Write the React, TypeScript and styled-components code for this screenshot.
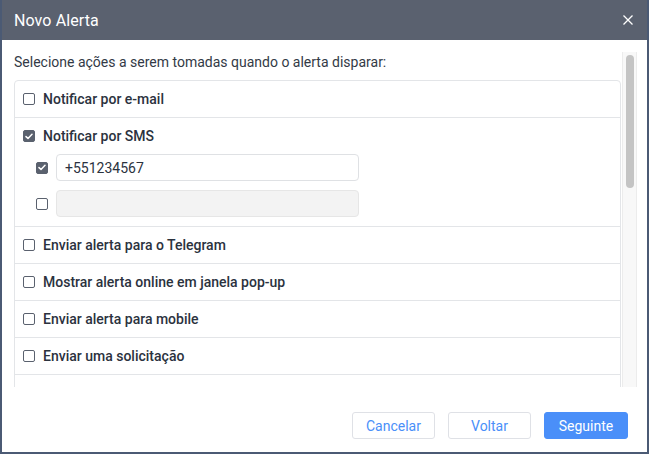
import React from "react";
import styled, { createGlobalStyle } from "styled-components";

const Global = createGlobalStyle`
  html, body { margin: 0; padding: 0; background: #fff; }
  body { font-family: Roboto, "Liberation Sans", sans-serif; }
  * { box-sizing: border-box; }
`;

const Dialog = styled.div`
  width: 649px;
  height: 454px;
  border: 2px solid #4b5a74;
  border-top-width: 0;
  display: flex;
  flex-direction: column;
  background: #fff;
`;

const Header = styled.div`
  height: 40px;
  flex: none;
  background: #5a616f;
  display: flex;
  align-items: center;
  justify-content: space-between;
  padding: 0 13px 0 12px;
  color: #fff;
  font-size: 16px;
`;

const Title = styled.div`
  letter-spacing: 0.1px;
`;

const Close = styled.button`
  border: 0;
  background: none;
  padding: 0;
  width: 12px;
  height: 12px;
  display: flex;
  cursor: pointer;
`;

const ScrollArea = styled.div`
  margin: 12px 10px 0 0;
  padding-left: 12px;
  height: 335px;
  flex: none;
  display: flex;
`;

const Content = styled.div`
  flex: 1;
  min-width: 0;
  overflow: hidden;
`;

const Track = styled.div`
  width: 15px;
  flex: none;
  margin-left: 1px;
  background: #f8f8f8;
  border-left: 1px solid #ececec;
  border-right: 1px solid #ececec;
  padding: 3px 2px 0 3px;
`;

const Thumb = styled.div`
  height: 133px;
  border-radius: 4px;
  background: #c4c4c4;
`;

const Intro = styled.div`
  font-size: 14px;
  color: #333a46;
  height: 28px;
  padding-top: 2px;
`;

const List = styled.div`
  border: 1px solid #e3e5e8;
  border-radius: 4px 4px 0 0;
`;

const Row = styled.div`
  border-top: 1px solid #e3e5e8;
  &:first-child { border-top: 0; }
  padding: 0 8px;
`;

const RowHead = styled.label`
  display: flex;
  align-items: center;
  height: 36px;
  gap: 8px;
  font-size: 14px;
  font-weight: 500;
  color: #2b323e;
  cursor: pointer;
`;

const Box = styled.span<{ $checked?: boolean }>`
  width: 12px;
  height: 12px;
  flex: none;
  border-radius: 2px;
  border: 1px solid #5a616e;
  background: ${(p) => (p.$checked ? "#5a616e" : "#fff")};
  display: flex;
  align-items: center;
  justify-content: center;
`;

const Sub = styled.div`
  padding: 0 0 9px 13px;
  display: flex;
  flex-direction: column;
  gap: 9px;
`;

const SubRow = styled.div`
  display: flex;
  align-items: center;
  gap: 8px;
`;

const Input = styled.input`
  width: 303px;
  height: 27px;
  border: 1px solid #dfe1e4;
  border-radius: 4px;
  padding: 0 8px;
  font-family: Roboto, "Liberation Sans", sans-serif;
  font-size: 14px;
  color: #2b323e;
  outline: none;
  &:disabled { background: #f3f3f3; border-color: #e6e6e6; }
`;

const Footer = styled.div`
  flex: 1;
  display: flex;
  justify-content: flex-end;
  align-items: flex-start;
  padding: 25px 19px 0 0;
  gap: 13px;
`;

const Button = styled.button<{ $primary?: boolean }>`
  height: 27px;
  width: ${(p) => (p.$primary ? 84 : 83)}px;
  border-radius: 3px;
  font-family: Roboto, "Liberation Sans", sans-serif;
  font-size: 14px;
  border: 1px solid ${(p) => (p.$primary ? "#4a8ff9" : "#dfe1e6")};
  background: ${(p) => (p.$primary ? "#4a8ff9" : "#fff")};
  color: ${(p) => (p.$primary ? "#fff" : "#4a8ff9")};
  cursor: pointer;
  padding: 0;
`;

const Check = () => (
  <svg width="8" height="7" viewBox="0 0 8 7">
    <path d="M1 3.6 L3 5.4 L7 1.3" fill="none" stroke="#fff" strokeWidth="1.5" strokeLinecap="round" strokeLinejoin="round" />
  </svg>
);

const CheckBox = ({ checked }: { checked?: boolean }) => (
  <Box $checked={checked}>{checked && <Check />}</Box>
);

const actions = [
  "Enviar alerta para o Telegram",
  "Mostrar alerta online em janela pop-up",
  "Enviar alerta para mobile",
  "Enviar uma solicitação",
  "Registrar evento para a unidade",
];

export default function App() {
  return (
    <>
      <Global />
      <Dialog>
        <Header>
          <Title>Novo Alerta</Title>
          <Close aria-label="Fechar">
            <svg width="12" height="12" viewBox="0 0 12 12">
              <path d="M1.5 1.5 L10.5 10.5 M10.5 1.5 L1.5 10.5" stroke="#fff" strokeWidth="1.3" />
            </svg>
          </Close>
        </Header>
        <ScrollArea>
          <Content>
            <Intro>Selecione ações a serem tomadas quando o alerta disparar:</Intro>
            <List>
              <Row>
                <RowHead><CheckBox />Notificar por e-mail</RowHead>
              </Row>
              <Row>
                <RowHead><CheckBox checked />Notificar por SMS</RowHead>
                <Sub>
                  <SubRow>
                    <CheckBox checked />
                    <Input defaultValue="+551234567" />
                  </SubRow>
                  <SubRow>
                    <CheckBox />
                    <Input disabled />
                  </SubRow>
                </Sub>
              </Row>
              {actions.map((a) => (
                <Row key={a}>
                  <RowHead><CheckBox />{a}</RowHead>
                </Row>
              ))}
            </List>
          </Content>
          <Track>
            <Thumb />
          </Track>
        </ScrollArea>
        <Footer>
          <Button>Cancelar</Button>
          <Button>Voltar</Button>
          <Button $primary>Seguinte</Button>
        </Footer>
      </Dialog>
    </>
  );
}
